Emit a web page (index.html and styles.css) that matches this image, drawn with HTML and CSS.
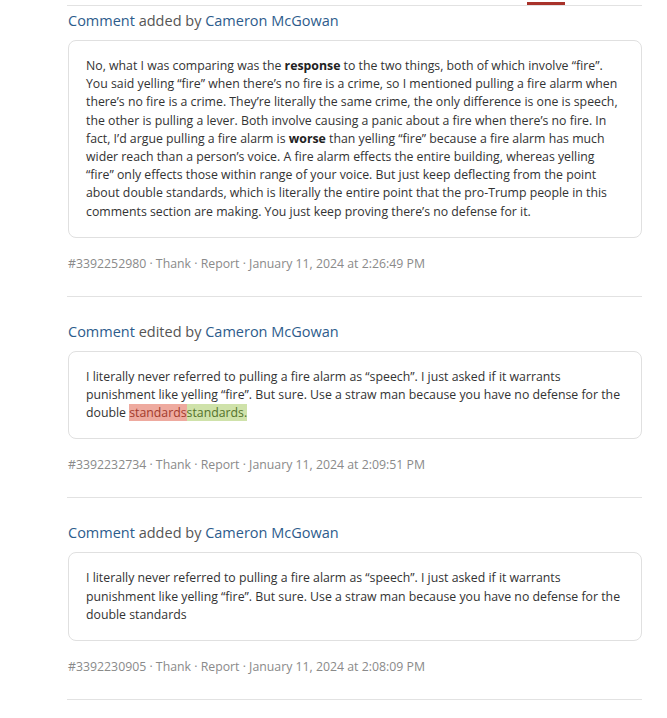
FILE: index.html
```html
<!DOCTYPE html>
<html>
<head>
<meta charset="utf-8">
<link rel="stylesheet" href="styles.css">
</head>
<body>
<div class="feed">
  <div class="tabs"><span class="tab-active"></span></div>

  <div class="entry">
    <h3 class="entry-title"><a class="link">Comment</a> added by <a class="link">Cameron McGowan</a></h3>
    <div class="card">
      <p>No, what I was comparing was the <b>response</b> to the two things, both of which involve “fire”. You said yelling “fire” when there’s no fire is a crime, so I mentioned pulling a fire alarm when there’s no fire is a crime. They’re literally the same crime, the only difference is one is speech, the other is pulling a lever. Both involve causing a panic about a fire when there’s no fire. In fact, I’d argue pulling a fire alarm is <b>worse</b> than yelling “fire” because a fire alarm has much wider reach than a person’s voice. A fire alarm effects the entire building, whereas yelling “fire” only effects those within range of your voice. But just keep deflecting from the point about double standards, which is literally the entire point that the pro-Trump people in this comments section are making. You just keep proving there’s no defense for it.</p>
    </div>
    <div class="meta">#3392252980 · Thank · Report · January 11, 2024 at 2:26:49 PM</div>
  </div>

  <div class="entry">
    <h3 class="entry-title"><a class="link">Comment</a> edited by <a class="link">Cameron McGowan</a></h3>
    <div class="card">
      <p>I literally never referred to pulling a fire alarm as “speech”. I just asked if it warrants punishment like yelling “fire”. But sure. Use a straw man because you have no defense for the double <del class="diff-del">standards</del><ins class="diff-ins">standards.</ins></p>
    </div>
    <div class="meta">#3392232734 · Thank · Report · January 11, 2024 at 2:09:51 PM</div>
  </div>

  <div class="entry">
    <h3 class="entry-title"><a class="link">Comment</a> added by <a class="link">Cameron McGowan</a></h3>
    <div class="card">
      <p>I literally never referred to pulling a fire alarm as “speech”. I just asked if it warrants punishment like yelling “fire”. But sure. Use a straw man because you have no defense for the double standards</p>
    </div>
    <div class="meta">#3392230905 · Thank · Report · January 11, 2024 at 2:08:09 PM</div>
  </div>
</div>
</body>
</html>
```

FILE: styles.css
```css
html, body {
  margin: 0;
  padding: 0;
  background: #ffffff;
}
body {
  font-family: "Open Sans", "Noto Sans", "Liberation Sans", sans-serif;
  color: #333333;
}
.feed {
  margin-left: 67px;
  width: 575px;
}
.tabs {
  height: 5px;
  display: flex;
  align-items: flex-end;
  padding-left: 460px;
  border-bottom: 1px solid #e2e2e2;
}
.tab-active {
  width: 38px;
  height: 3px;
  background: #a8322a;
}
.entry {
  padding: 0 0 23px 1px;
  border-bottom: 1px solid #e2e2e2;
}
.entry-title {
  margin: 0;
  padding-top: 5px;
  font-size: 14.5px;
  font-weight: normal;
  line-height: 20px;
  color: #555555;
}
.entry + .entry .entry-title {
  padding-top: 25px;
}
.link {
  color: #2d5c8c;
  text-decoration: none;
}
.card {
  margin-top: 9px;
  border: 1px solid #e0e0e0;
  border-radius: 8px;
  padding: 16px 20px 16px 17px;
}
.card p {
  margin: 0;
  font-size: 12.3px;
  line-height: 18.2px;
  color: #333333;
}
.card b {
  font-weight: 700;
  color: #222222;
}
.diff-del {
  text-decoration: none;
  background: #eeaa9f;
  color: #a23a2c;
}
.diff-ins {
  text-decoration: none;
  background: #cfe2aa;
  color: #55722a;
}
.meta {
  margin-top: 17px;
  font-size: 12.3px;
  line-height: 18px;
  color: #8a8a8a;
}
```
